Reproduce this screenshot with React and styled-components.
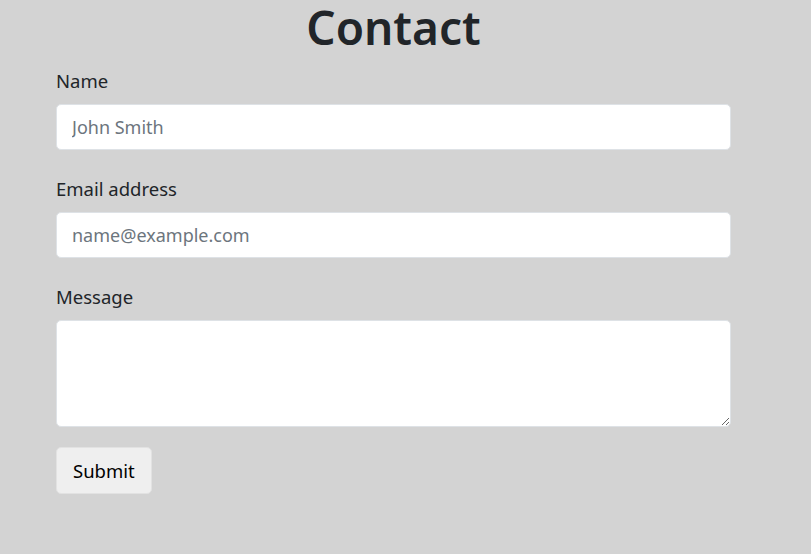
import React from "react";
import styled, { createGlobalStyle } from "styled-components";

const Global = createGlobalStyle`
  html, body {
    margin: 0;
    background: #d3d3d3;
  }
  body {
    font-family: "Noto Sans", "Open Sans", sans-serif;
    color: #212529;
  }
`;

const Page = styled.div`
  width: 675px;
  padding: 0 0 0 56px;
`;

const Title = styled.h1`
  margin: 0 0 7px;
  height: 59px;
  line-height: 54px;
  font-size: 46px;
  font-weight: 600;
  text-align: center;
  color: #212529;
`;

const Form = styled.form`
  display: flex;
  flex-direction: column;
  gap: 24px;
`;

const Field = styled.div`
  display: flex;
  flex-direction: column;
  gap: 8px;
`;

const Label = styled.label`
  font-size: 18.5px;
  line-height: 30px;
  height: 30px;
`;

const Input = styled.input`
  box-sizing: border-box;
  width: 100%;
  height: ${(p) => (p.as === "textarea" ? "107px" : "46px")};
  padding: 8px 15px;
  font: inherit;
  font-size: 18px;
  color: #212529;
  background: #fff;
  border: 1px solid #dee2e6;
  border-radius: 5px;
  outline: none;
  resize: vertical;
  &::placeholder {
    color: #6c757d;
  }
`;

const Submit = styled.button`
  align-self: flex-start;
  box-sizing: border-box;
  height: 47px;
  margin-top: -4px;
  padding: 0 16px;
  font: inherit;
  font-size: 18.5px;
  color: #000;
  background: #efefef;
  border: 1px solid #e2e2e2;
  border-radius: 5px;
`;

export default function App() {
  return (
    <>
      <Global />
      <Page>
        <Title>Contact</Title>
        <Form onSubmit={(e) => e.preventDefault()}>
          <Field>
            <Label htmlFor="name">Name</Label>
            <Input id="name" placeholder="John Smith" />
          </Field>
          <Field>
            <Label htmlFor="email">Email address</Label>
            <Input id="email" type="email" placeholder="name@example.com" />
          </Field>
          <Field>
            <Label htmlFor="message">Message</Label>
            <Input as="textarea" id="message" />
          </Field>
          <Submit type="submit">Submit</Submit>
        </Form>
      </Page>
    </>
  );
}
